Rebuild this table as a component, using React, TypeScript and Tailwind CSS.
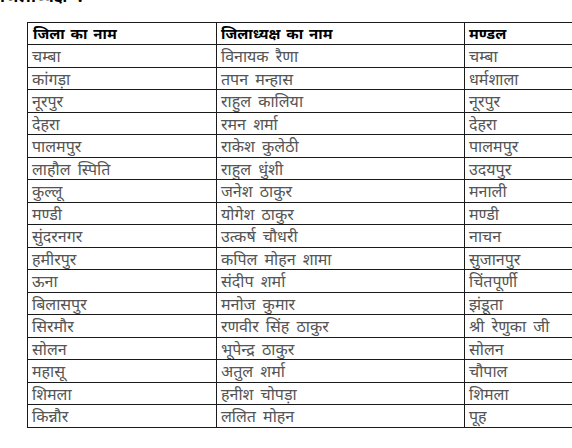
import React from "react";

const rows: [string, string, string][] = [
  ["चम्बा", "विनायक रैणा", "चम्बा"],
  ["कांगड़ा", "तपन मन्हास", "धर्मशाला"],
  ["नूरपुर", "राहुल कालिया", "नूरपुर"],
  ["देहरा", "रमन शर्मा", "देहरा"],
  ["पालमपुर", "राकेश कुलेठी", "पालमपुर"],
  ["लाहौल स्पिति", "राहुल धुंशी", "उदयपुर"],
  ["कुल्लू", "जनेश ठाकुर", "मनाली"],
  ["मण्डी", "योगेश ठाकुर", "मण्डी"],
  ["सुंदरनगर", "उत्कर्ष चौधरी", "नाचन"],
  ["हमीरपुर", "कपिल मोहन शामा", "सुजानपुर"],
  ["ऊना", "संदीप शर्मा", "चिंतपूर्णी"],
  ["बिलासपुर", "मनोज कुमार", "झंडूता"],
  ["सिरमौर", "रणवीर सिंह ठाकुर", "श्री रेणुका जी"],
  ["सोलन", "भूपेन्द्र ठाकुर", "सोलन"],
  ["महासू", "अतुल शर्मा", "चौपाल"],
  ["शिमला", "हनीश चोपड़ा", "शिमला"],
  ["किन्नौर", "ललित मोहन", "पूह"],
];

const font = { fontFamily: '"Noto Sans", "Liberation Sans", sans-serif' };

const cellBase = "border-r-[1.5px] border-b-[1.5px] border-[#1a1a1a] pl-[4px] whitespace-nowrap overflow-hidden";
const head = cellBase + " text-[15px] font-bold text-black leading-[21px] [word-spacing:2px]";
const body = cellBase + " text-[16px] text-[#555] leading-[22px] [word-spacing:3px]";

export default function App() {
  return (
    <div className="w-[572px] h-[448px] bg-white overflow-hidden" style={font}>
      <div className="-mt-[13px] text-[17px] font-bold text-black leading-[18px] [word-spacing:6px]">जिलाध्यक्ष :</div>
      <div className="ml-[27px] mt-[17px] w-[545px] border-t-[1.5px] border-l-[1.5px] border-[#1a1a1a]">
        <div className="grid grid-cols-[189px_248px_108px] h-[22px]">
          <div className={head + " pl-[5px]"}>जिला का नाम</div>
          <div className={head}>जिलाध्यक्ष का नाम</div>
          <div className={head}>मण्डल</div>
        </div>
        {rows.map((r, i) => (
          <div key={i} className="grid grid-cols-[189px_248px_108px] h-[22.5px]">
            <div className={body}>{r[0]}</div>
            <div className={body}>{r[1]}</div>
            <div className={body}>{r[2]}</div>
          </div>
        ))}
      </div>
    </div>
  );
}
